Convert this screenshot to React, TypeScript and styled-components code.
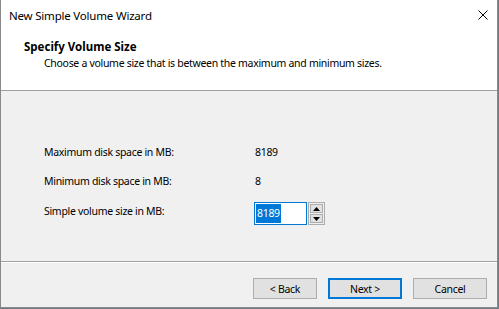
import React from "react";
import styled, { createGlobalStyle } from "styled-components";

const Global = createGlobalStyle`
  html, body { margin: 0; padding: 0; background: #6f7a80; }
  body { font-family: "Noto Sans", "Open Sans", sans-serif; font-size: 10.5px; letter-spacing: -0.3px; color: #000; }
  * { box-sizing: border-box; }
`;

const Window = styled.div`
  width: 498px;
  height: 308px;
  display: flex;
  flex-direction: column;
  background: #fff;
  border-left: 1px solid #8a8a8a;
  border-right: 1px solid #8a8a8a;
  border-bottom: 1px solid #8a8a8a;
  overflow: hidden;
`;

const TitleBar = styled.div`
  height: 30px;
  flex: none;
  display: flex;
  align-items: center;
  justify-content: space-between;
  padding: 0 8px 0 8px;
  font-size: 11.5px;
  letter-spacing: -0.2px;
`;

const CloseIcon = styled.svg`
  width: 10px;
  height: 10px;
  margin-right: 1px;
`;

const Header = styled.div`
  height: 61px;
  flex: none;
  border-bottom: 1px solid #a0a0a0;
  padding: 9px 0 0 23px;
  display: flex;
  flex-direction: column;
`;

const HeaderTitle = styled.div`
  font-weight: 700;
  font-size: 11.5px;
  letter-spacing: 0;
  line-height: 16px;
`;

const HeaderSub = styled.div`
  padding-left: 20px;
  line-height: 16px;
`;

const Body = styled.div`
  flex: 1;
  background: #f0f0f0;
  padding: 53px 0 0 43px;
  display: flex;
  flex-direction: column;
  gap: 13px;
  border-bottom: 1px solid #a0a0a0;
`;

const Row = styled.div<{ $h: number }>`
  height: ${(p) => p.$h}px;
  display: grid;
  grid-template-columns: 210px auto;
  align-items: start;
`;

const Label = styled.div<{ $top?: number }>`
  line-height: 16px;
  padding-top: ${(p) => p.$top ?? 0}px;
`;

const Value = styled.div`
  line-height: 16px;
  padding-left: 1px;
`;

const Spin = styled.div`
  display: flex;
  height: 23px;
`;

const Input = styled.div`
  width: 53px;
  height: 23px;
  border: 1px solid #0078d7;
  background: #fff;
  padding: 1px;
  display: flex;
`;

const Selected = styled.span`
  background: #0078d7;
  color: #fff;
  line-height: 19px;
  padding: 0 1px;
`;

const SpinBtns = styled.div`
  width: 17px;
  height: 23px;
  margin-left: 1px;
  border: 1px solid #adadad;
  background: #f0f0f0;
  display: flex;
  flex-direction: column;
  gap: 1px;
  padding: 1px;
`;

const SpinBtn = styled.div`
  flex: 1;
  background: #e1e1e1;
  border: 1px solid #adadad;
  display: flex;
  align-items: center;
  justify-content: center;
`;

const Footer = styled.div`
  flex: none;
  height: 45px;
  display: flex;
  justify-content: flex-end;
  align-items: flex-start;
  padding: 15px 10px 0 0;
  border-top: 1px solid #fff;
  background: #f0f0f0;
`;

const Button = styled.div<{ $w: number; $def?: boolean; $ml: number }>`
  width: ${(p) => p.$w}px;
  height: 21px;
  margin-left: ${(p) => p.$ml}px;
  background: #e1e1e1;
  border: ${(p) => (p.$def ? "2px solid #0078d7" : "1px solid #adadad")};
  display: flex;
  align-items: center;
  justify-content: center;
`;

export default function App() {
  return (
    <>
      <Global />
      <Window>
        <TitleBar>
          <span>New Simple Volume Wizard</span>
          <CloseIcon viewBox="0 0 10 10">
            <path d="M0.5 0.5 L9.5 9.5 M9.5 0.5 L0.5 9.5" stroke="#000" strokeWidth="1" fill="none" />
          </CloseIcon>
        </TitleBar>
        <Header>
          <HeaderTitle>Specify Volume Size</HeaderTitle>
          <HeaderSub>Choose a volume size that is between the maximum and minimum sizes.</HeaderSub>
        </Header>
        <Body>
          <Row $h={16}>
            <Label>Maximum disk space in MB:</Label>
            <Value>8189</Value>
          </Row>
          <Row $h={16}>
            <Label>Minimum disk space in MB:</Label>
            <Value>8</Value>
          </Row>
          <Row $h={23}>
            <Label $top={1}>Simple volume size in MB:</Label>
            <Spin>
              <Input>
                <Selected>8189</Selected>
              </Input>
              <SpinBtns>
                <SpinBtn>
                  <svg width="7" height="4" viewBox="0 0 7 4"><path d="M3.5 0 L7 4 L0 4 Z" fill="#000" /></svg>
                </SpinBtn>
                <SpinBtn>
                  <svg width="7" height="4" viewBox="0 0 7 4"><path d="M0 0 L7 0 L3.5 4 Z" fill="#000" /></svg>
                </SpinBtn>
              </SpinBtns>
            </Spin>
          </Row>
        </Body>
        <Footer>
          <Button $w={64} $ml={0}>&lt; Back</Button>
          <Button $w={74} $ml={11} $def>Next &gt;</Button>
          <Button $w={74} $ml={11}>Cancel</Button>
        </Footer>
      </Window>
    </>
  );
}
